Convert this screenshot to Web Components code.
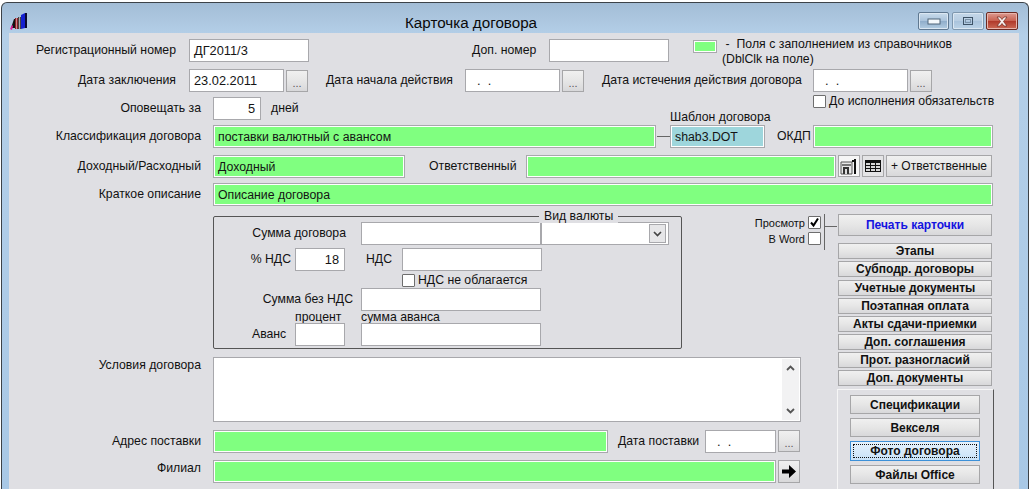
<!DOCTYPE html>
<html>
<head>
<meta charset="utf-8">
<title>Карточка договора</title>
<style>
  html, body { margin: 0; padding: 0; background: #fff; overflow: hidden; }
  body { width: 1029px; height: 489px; font: 12.25px 'Liberation Sans', Arial, sans-serif; color: #111; }
</style>
</head>
<body>
<script>
// small helper so each element only has to say what differs
function shadow (el, html) {
  el.attachShadow({ mode: 'open' }).innerHTML = html
}

class WinFrame extends HTMLElement {
  connectedCallback () {
    shadow(this, /* html */ `
      <style>
        :host { display: flex; flex-direction: column; box-sizing: border-box; height: 489px; margin-top: 2px;
          border: 1px solid #3c4248; border-bottom: 0; border-radius: 6px 6px 0 0; margin-left: 1px;
          background: linear-gradient(180deg, #a3bdd6 0, #b4cfe8 32px, #a8c8e6 100%); overflow: hidden; }
        .title { display: flex; height: 30px; flex: none; align-items: center; position: relative; }
        .logo { margin-left: 8px; margin-top: 7px; }
        h1 { position: absolute; left: 403px; top: 10px; margin: 0; font: 15.2px/20px 'Liberation Sans', Arial, sans-serif; color: #0a0a0a; }
        .ctl { display: flex; margin-left: auto; margin-right: 10px; margin-top: 6px; gap: 3px; }
        .ctl span { display: flex; align-items: center; justify-content: center; box-sizing: border-box; height: 18px; width: 31px; border: 1px solid #5f7890; border-radius: 2px;
          background: linear-gradient(180deg, #c9dcec 0, #a9c2da 50%, #8fadca 51%, #b3cde2 100%); box-shadow: inset 0 0 0 1px #dbe7f2; }
        .ctl .r { width: 32px; background: linear-gradient(180deg, #c4d7e9 0, #b7cde2 50%, #a9c3dc 51%, #bcd3e7 100%); border-color: #7e97ae; }
        .ctl .x { width: 32px; margin-left: -1px; border-color: #6b2a22; background: linear-gradient(180deg, #dc9a90 0, #c8604f 50%, #b0392a 51%, #cc6a55 100%); box-shadow: inset 0 0 0 1px #e8b5ac; }
        .body { flex: 1; margin: 0 9px 0 7px; background: #dfdfe3; position: relative; }
      </style>
      <div class="title">
        <svg class="logo" width="17" height="17" viewBox="0 0 17 17">
          <path d="M1 15 4 6h2v9z" fill="#111"/><path d="M0 16l2-4 1 1-1 4z" fill="#e0189a"/>
          <path d="M5 5h3v11H5z" fill="#8a1f2a"/><path d="M6 5h1v11H6z" fill="#c88a8a"/>
          <path d="M8 4h3v12H8z" fill="#444"/><path d="M9 4h1v12H9z" fill="#aaa"/>
          <path d="M11 2l4-2v15l-4 1z" fill="#1420d0"/><path d="M15 0h2v15h-2z" fill="#0a0a30"/>
        </svg>
        <h1>Карточка договора</h1>
        <div class="ctl">
          <span><svg width="14" height="8"><rect x="1" y="2" width="12" height="5" fill="#f4f8fb" stroke="#4f6478"/></svg></span>
          <span class="r"><svg width="12" height="10"><rect x="1.500" y="1.500" width="9" height="7" fill="none" stroke="#3d5266"/><rect x="3.500" y="3.500" width="5" height="3" fill="none" stroke="#7b92a8"/></svg></span>
          <span class="x"><svg width="16" height="11"><path d="M3 1h3l2 2.500 2-2.500h3l-3.500 4.500 3.500 4.500h-3l-2-2.500-2 2.500h-3l3.500-4.500z" fill="#f8f0ee" stroke="#6e2a20" stroke-width=".7"/></svg></span>
        </div>
      </div>
      <div class="body"><slot></slot></div>`)
  }
}

class TextField extends HTMLElement {
  connectedCallback () {
    const kind = this.getAttribute('kind') || ''
    const w = this.getAttribute('w')
    const h = this.getAttribute('h') || 23
    const align = this.hasAttribute('right') ? 'right' : 'left'
    const fills = { green: '#80ff80', blue: '#9ed6dc', '': '#fff' }
    const size = kind ? 12.3 : 12.8
    shadow(this, /* html */ `
      <style>
        :host { display: block; flex: none; box-sizing: border-box; width: ${w}px; height: ${h}px;
          border: 1px solid #a8a8ac; box-shadow: inset 0 0 0 1px #fff; background: ${fills[kind]};
          padding: 1px 5px 0 4px; font: ${size}px/20px 'Liberation Sans', Arial, sans-serif; color: #141414;
          text-align: ${align}; white-space: nowrap; overflow: hidden; }
      </style><slot></slot>`)
  }
}

class PushButton extends HTMLElement {
  connectedCallback () {
    const w = this.getAttribute('w')
    const h = this.getAttribute('h') || 22
    shadow(this, /* html */ `
      <style>
        :host { display: flex; flex: none; align-items: center; justify-content: center; box-sizing: border-box;
          width: ${w}px; height: ${h}px; border: 1px solid #a6a6a8; background: linear-gradient(180deg, #f0f0f0 0, #e6e6e6 50%, #d8d8da 100%);
          font-size: 12px; color: #111; white-space: nowrap; }
        :host([bold]) { font-weight: bold; }
        :host([blue]) { color: #1414e0; }
        :host([flat]) { background: #e4e4e6; }
        :host([light]) { background: #f6f6f6; }
        :host([dots]) { color: #555; font-size: 11px; padding-top: 4px; }
        :host([focus]) { border-color: #3c90d8; background: linear-gradient(180deg, #e6f2fc 0, #c8e2f8 100%); }
        .dots { border: 1px dotted #111; align-self: stretch; flex: 1; margin: 2px; display: flex; align-items: center; justify-content: center; }
      </style>
      ${this.hasAttribute('focus') ? '<div class="dots"><slot></slot></div>' : '<slot></slot>'}`)
  }
}

class CheckBox extends HTMLElement {
  connectedCallback () {
    const mark = this.hasAttribute('checked')
      ? '<svg width="11" height="11" viewBox="0 0 11 11"><path d="M2 5.500 4.500 8.500 9 1.500" fill="none" stroke="#000" stroke-width="2"/></svg>'
      : ''
    shadow(this, /* html */ `
      <style>
        :host { display: flex; flex: none; align-items: center; white-space: nowrap; }
        :host([reverse]) { flex-direction: row-reverse; }
        .box { display: flex; align-items: center; justify-content: center; box-sizing: border-box; width: 13px; height: 13px;
          background: #fff; border: 1px solid #6e6e6e; border-radius: 1px; }
        slot { display: block; margin: 0 3px; }
      </style>
      <span class="box">${mark}</span><slot></slot>`)
  }
}

class ComboBox extends HTMLElement {
  connectedCallback () {
    const w = this.getAttribute('w')
    shadow(this, /* html */ `
      <style>
        :host { display: flex; flex: none; justify-content: flex-end; align-items: center; box-sizing: border-box; width: ${w}px; height: 23px;
          border: 1px solid #a8a8ac; background: #fff; padding-right: 2px; }
        span { display: flex; align-items: center; justify-content: center; box-sizing: border-box; width: 17px; height: 19px;
          border: 1px solid #a8a8ac; background: #e6e6e8; }
      </style>
      <span><svg width="9" height="6"><path d="M1 1l3.500 3.500L8 1" fill="none" stroke="#444" stroke-width="1.700"/></svg></span>`)
  }
}

class GroupBox extends HTMLElement {
  connectedCallback () {
    shadow(this, /* html */ `
      <style>
        :host { display: block; flex: none; box-sizing: border-box; position: relative; width: 469px; height: 133px; border: 1px solid #555; border-radius: 2px; }
        .legend { position: absolute; left: 325px; top: -8px; padding: 0 5px; background: #dfdfe3; line-height: 14px; }
      </style>
      <span class="legend"><slot name="legend"></slot></span><slot></slot>`)
  }
}

class NotesArea extends HTMLElement {
  connectedCallback () {
    shadow(this, /* html */ `
      <style>
        :host { display: flex; flex: none; justify-content: flex-end; box-sizing: border-box; width: 588px; height: 65px; border: 1px solid #a8a8ac; background: #fff; padding: 1px; }
        .bar { display: flex; flex-direction: column; justify-content: space-between; align-items: center; box-sizing: border-box; width: 17px; padding: 6px 0; background: #f2f2f3; }
      </style>
      <div class="bar">
        <svg width="9" height="6"><path d="M1 5l3.500-3.500L8 5" fill="none" stroke="#555" stroke-width="1.800"/></svg>
        <svg width="9" height="6"><path d="M1 1l3.500 3.500L8 1" fill="none" stroke="#555" stroke-width="1.800"/></svg>
      </div>`)
  }
}

customElements.define('win-frame', WinFrame)
customElements.define('text-field', TextField)
customElements.define('push-button', PushButton)
customElements.define('check-box', CheckBox)
customElements.define('combo-box', ComboBox)
customElements.define('group-box', GroupBox)
customElements.define('notes-area', NotesArea)

class ContractCard extends HTMLElement {
  connectedCallback () {
    shadow(this, /* html */ `
      <style>
        :host { display: block; padding-top: 6px; }
        .row { display: flex; align-items: flex-start; }
        .lbl { flex: none; text-align: right; line-height: 14px; padding-top: 4px; white-space: nowrap; }
        .m { white-space: nowrap; line-height: 14px; padding-top: 4px; flex: none; }
        .split { display: flex; }
        .right { display: flex; flex-direction: column; width: 156px; flex: none; }
        .panel { box-sizing: border-box; width: 157px; height: 110px; margin-top: 3px; margin-left: -1px; padding: 5px 12px 0 12px;
          border-left: 1px solid #f6f6f6; border-top: 1px solid #f6f6f6; border-right: 1px solid #555; display: flex; flex-direction: column; gap: 4px; }
        .link { width: 1px; background: #666; height: 36px; margin-left: 3px; position: relative; flex: none; }
        .link i { position: absolute; left: 1px; top: 12px; width: 12px; height: 1px; background: #666; }
        .checks { display: flex; flex-direction: column; align-items: flex-end; flex: none; font-size: 11px; padding-top: 2px; gap: 3px; }
      </style>

      <div class="row" style="height:30px">
        <span class="lbl" style="width:167px">Регистрационный номер</span>
        <text-field w="120" style="margin-left:13px">ДГ2011/3</text-field>
        <span class="m" style="margin-left:163px;width:65px">Доп. номер</span>
        <text-field w="120" style="margin-left:12px"></text-field>
        <text-field w="24" h="13" kind="green" style="margin-left:24px;margin-top:1px"></text-field>
        <div style="margin-left:5px;line-height:15px;margin-top:-2px;white-space:nowrap">&nbsp;-<span style="margin-left:7px;letter-spacing:.03px">Поля с заполнением из справочников</span><br>(DblClk на поле)</div>
      </div>

      <div class="row" style="height:28px">
        <span class="lbl" style="width:167px">Дата заключения</span>
        <text-field w="95" style="margin-left:13px">23.02.2011</text-field>
        <push-button w="22" dots style="margin-left:2px;margin-top:1px">...</push-button>
        <span class="m" style="margin-left:18px;width:127px">Дата начала действия</span>
        <text-field w="95" style="margin-left:12px">&nbsp;&nbsp;.&nbsp;&nbsp;.</text-field>
        <push-button w="22" dots style="margin-left:2px;margin-top:1px">...</push-button>
        <span class="m" style="margin-left:18px;width:199px">Дата истечения действия договора</span>
        <text-field w="95" style="margin-left:12px">&nbsp;&nbsp;.&nbsp;&nbsp;.</text-field>
        <push-button w="22" dots style="margin-left:2px;margin-top:1px">...</push-button>
      </div>

      <div class="row" style="height:28px">
        <span class="lbl" style="width:192px">Оповещать за</span>
        <text-field w="48" right style="margin-left:12px">5</text-field>
        <span class="m" style="margin-left:10px;width:28px">дней</span>
        <check-box style="margin-left:514px;margin-top:-3px">До исполнения обязательств</check-box>
      </div>

      <div class="row" style="height:30px">
        <span class="lbl" style="width:192px">Классификация договора</span>
        <text-field w="443" kind="green" style="margin-left:12px">поставки валютный с авансом</text-field>
        <span style="width:13px;height:1px;background:#666;margin-top:11px;margin-left:1px;flex:none"></span>
        <div style="position:relative;flex:none">
          <span style="position:absolute;left:0;top:-15px;line-height:14px;white-space:nowrap">Шаблон договора</span>
          <text-field w="95" kind="blue">shab3.DOT</text-field>
        </div>
        <span class="m" style="margin-left:12px;width:32px">ОКДП</span>
        <text-field w="180" kind="green" style="margin-left:4px"></text-field>
      </div>

      <div class="row" style="height:28px">
        <span class="lbl" style="width:192px">Доходный/Расходный</span>
        <text-field w="192" kind="green" style="margin-left:12px">Доходный</text-field>
        <span class="m" style="margin-left:24px;width:86px">Ответственный</span>
        <text-field w="310" kind="green" style="margin-left:11px"></text-field>
        <push-button w="22" light style="margin-left:2px">
          <svg width="18" height="17" viewBox="0 0 18 17"><path d="M1 4h11v12H1z" fill="#e8e8e8" stroke="#555"/><path d="M3 9h6v7H3z" fill="#333"/><path d="M5 11h2v5H5z" fill="#ddd"/><path d="M2 6h9v2H2z" fill="#777"/><path d="M14 1h2v15h-2z" fill="#111"/><path d="M12 2h4v2h-4z" fill="#111"/></svg>
        </push-button>
        <push-button w="22" flat style="margin-left:2px">
          <svg width="16" height="12" viewBox="0 0 16 12"><path d="M0 0h16v12H0z" fill="#111"/><path d="M1 3h4v2H1zM6 3h4v2H6zM11 3h4v2h-4zM1 6h4v2H1zM6 6h4v2H6zM11 6h4v2h-4zM1 9h4v2H1zM6 9h4v2H6zM11 9h4v2h-4z" fill="#d8d8d8"/></svg>
        </push-button>
        <push-button w="106" style="margin-left:2px">+ Ответственные</push-button>
      </div>

      <div class="row" style="height:31px">
        <span class="lbl" style="width:192px">Краткое описание</span>
        <text-field w="780" kind="green" style="margin-left:12px">Описание договора</text-field>
      </div>

      <div class="split">
        <div style="width:829px;flex:none">
          <div class="row" style="height:143px">
            <group-box style="margin-left:204px;margin-top:2px">
              <span slot="legend">Вид валюты</span>
              <div class="row" style="margin-top:5px;height:26px">
                <span class="lbl" style="width:132px">Сумма договора</span>
                <text-field w="180" style="margin-left:15px"></text-field>
                <combo-box w="128"></combo-box>
              </div>
              <div class="row" style="height:25px">
                <span class="lbl" style="width:77px">% НДС</span>
                <text-field w="50" right style="margin-left:4px">18</text-field>
                <span class="m" style="margin-left:21px;width:26px">НДС</span>
                <text-field w="140" style="margin-left:10px"></text-field>
              </div>
              <div class="row" style="height:15px">
                <check-box style="margin-left:188px">НДС не облагается</check-box>
              </div>
              <div class="row" style="height:26px">
                <span class="lbl" style="width:139px">Сумма без НДС</span>
                <text-field w="180" style="margin-left:8px"></text-field>
              </div>
              <div class="row" style="height:9px">
                <span style="margin-left:81px;width:47px;flex:none;line-height:14px;white-space:nowrap;margin-top:-4px">процент</span>
                <span style="margin-left:19px;line-height:14px;white-space:nowrap;margin-top:-4px">сумма аванса</span>
              </div>
              <div class="row">
                <span class="m" style="margin-left:38px;width:33px">Аванс</span>
                <text-field w="50" style="margin-left:10px"></text-field>
                <text-field w="180" style="margin-left:16px"></text-field>
              </div>
            </group-box>
            <div class="checks" style="margin-left:71px;width:68px">
              <check-box reverse checked>Просмотр</check-box>
              <check-box reverse>В Word</check-box>
            </div>
            <div class="link"><i></i></div>
          </div>
          <div class="row" style="height:73px">
            <span class="lbl" style="width:192px;padding-top:1px">Условия договора</span>
            <notes-area style="margin-left:12px"></notes-area>
          </div>
          <div class="row" style="height:30px">
            <span class="lbl" style="width:192px">Адрес поставки</span>
            <text-field w="395" kind="green" style="margin-left:12px"></text-field>
            <span class="m" style="margin-left:10px;width:80px">Дата поставки</span>
            <text-field w="71" style="margin-left:7px">&nbsp;&nbsp;.&nbsp;&nbsp;.</text-field>
            <push-button w="22" dots style="margin-left:2px">...</push-button>
          </div>
          <div class="row">
            <span class="lbl" style="width:192px;padding-top:1px">Филиал</span>
            <text-field w="563" kind="green" style="margin-left:12px"></text-field>
            <push-button w="22" style="margin-left:2px;height:23px">
              <svg width="14" height="13" viewBox="0 0 14 13"><path d="M0 4.500h7V0l7 6.500-7 6.500V8.500H0z" fill="#000"/></svg>
            </push-button>
          </div>
        </div>
        <div class="right">
          <push-button w="154" h="22" bold blue>Печать карточки</push-button>
          <push-button w="154" h="16" bold style="margin-top:7px">Этапы</push-button>
          <push-button w="154" h="16" bold style="margin-top:2px">Субподр. договоры</push-button>
          <push-button w="154" h="16" bold style="margin-top:3px">Учетные документы</push-button>
          <push-button w="154" h="16" bold style="margin-top:2px">Поэтапная оплата</push-button>
          <push-button w="154" h="16" bold style="margin-top:2px">Акты сдачи-приемки</push-button>
          <push-button w="154" h="16" bold style="margin-top:2px">Доп. соглашения</push-button>
          <push-button w="154" h="16" bold style="margin-top:2px">Прот. разногласий</push-button>
          <push-button w="154" h="16" bold style="margin-top:2px">Доп. документы</push-button>
          <div class="panel">
            <push-button w="130" h="19" bold>Спецификации</push-button>
            <push-button w="130" h="19" bold>Векселя</push-button>
            <push-button w="130" h="20" bold focus>Фото договора</push-button>
            <push-button w="130" h="19" bold>Файлы Office</push-button>
          </div>
        </div>
      </div>`)
  }
}
customElements.define('contract-card', ContractCard)
</script>
<win-frame><contract-card></contract-card></win-frame>
</body>
</html>
